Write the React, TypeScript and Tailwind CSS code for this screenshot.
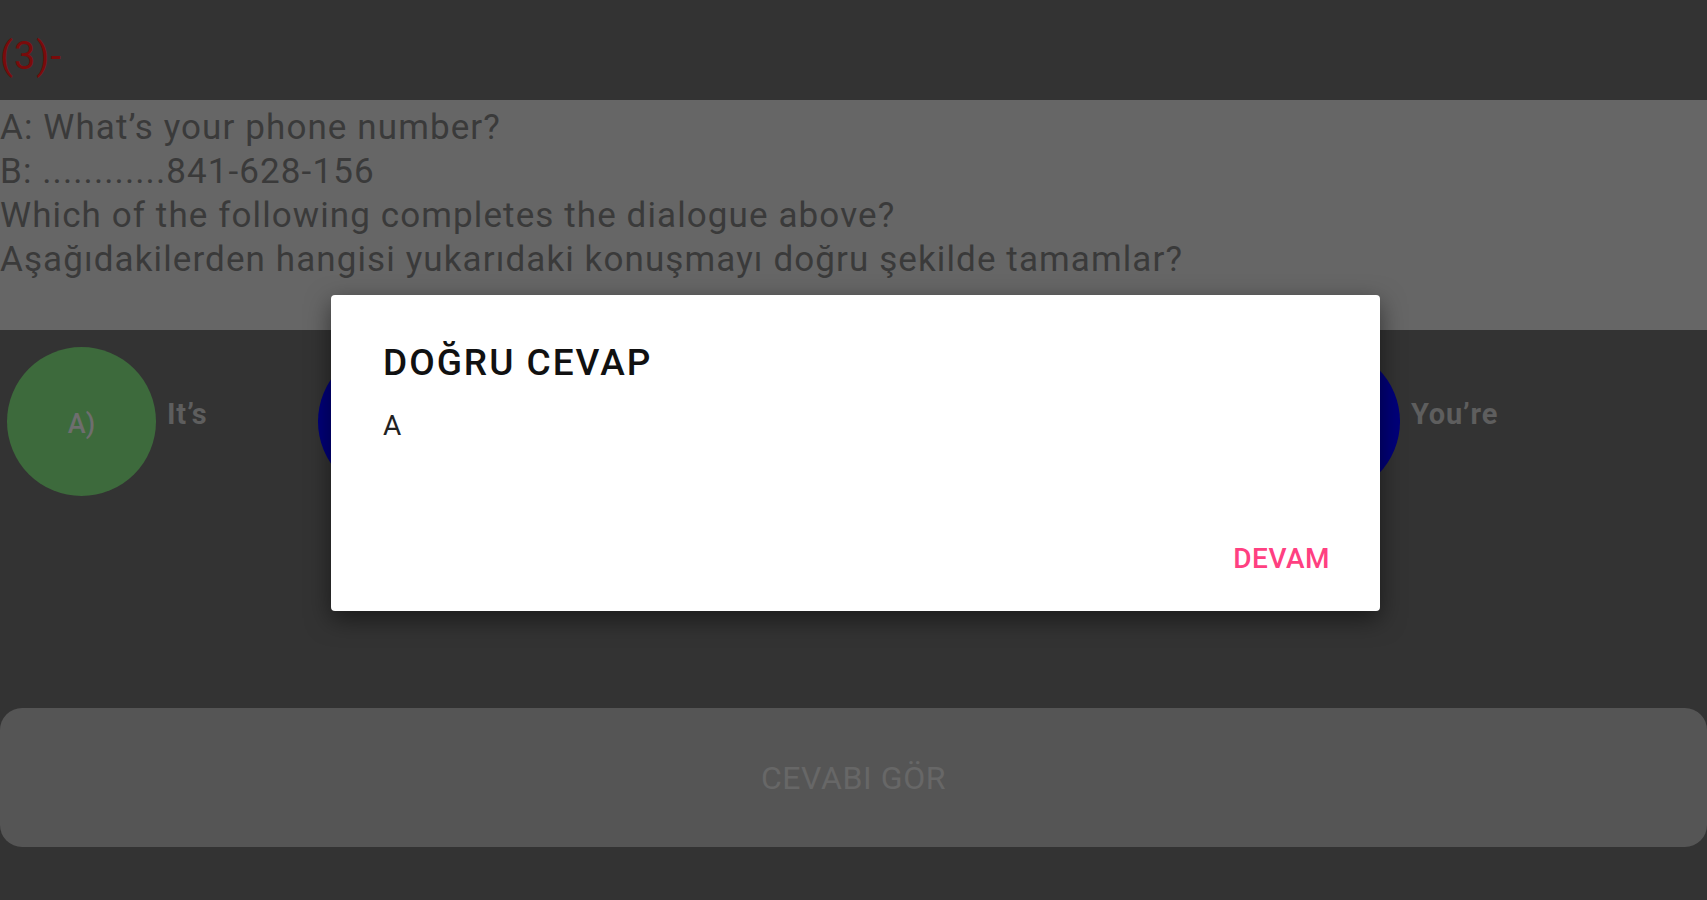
const options = [
  { label: "A)", text: "It’s", color: "bg-[#3d6a3c]" },
  { label: "B)", text: "It’s", color: "bg-[#00007a]" },
  { label: "C)", text: "It’s", color: "bg-[#00007a]" },
  { label: "D)", text: "It’s", color: "bg-[#00007a]" },
  { label: "E)", text: "You’re", color: "bg-[#00007a]" },
];

export default function App() {
  return (
    <div
      className="relative min-h-[900px] bg-[#333333] overflow-hidden"
      style={{ fontFamily: "Roboto, 'Noto Sans', sans-serif" }}
    >
      {/* question number */}
      <div className="h-[100px] pt-[34px]">
        <span className="text-[38px] leading-[44px] tracking-[1px] text-[#7a0b0b]">(3)-</span>
      </div>

      {/* question body */}
      <div className="h-[230px] bg-[#666666] pt-[6px] text-[35px] leading-[44px] tracking-[1.1px] text-[#3a3a3a]">
        <p>A: What’s your phone number?</p>
        <p>B: ............841-628-156</p>
        <p>Which of the following completes the dialogue above?</p>
        <p>Aşağıdakilerden hangisi yukarıdaki konuşmayı doğru şekilde tamamlar?</p>
      </div>

      {/* options */}
      <div className="flex h-[378px] pt-[17px] pl-[7px]">
        {options.map((o) => (
          <div key={o.label} className="flex w-[311px] shrink-0 items-start gap-[11px]">
            <div
              className={`flex h-[149px] w-[149px] shrink-0 items-center justify-center rounded-full ${o.color}`}
            >
              <span className="mt-[6px] text-[27px] font-medium text-[#6e6e6e]">{o.label}</span>
            </div>
            <span className="mt-[46px] text-[29px] font-bold tracking-[0.8px] text-[#5e5e5e]">{o.text}</span>
          </div>
        ))}
      </div>

      {/* show answer button */}
      <button className="flex h-[139px] w-full items-center justify-center rounded-[22px] bg-[#555555] text-[32px] tracking-[0.6px] text-[#676767]">
        CEVABI GÖR
      </button>

      {/* dialog */}
      <div className="absolute inset-0 flex items-center justify-center pt-[6px] pl-[4px]">
        <div className="flex h-[316px] w-[1049px] flex-col rounded-[4px] bg-white pl-[52px] pr-[50px] pt-[46px] pb-[36px] shadow-[0_8px_24px_rgba(0,0,0,0.5)]">
          <h2 className="text-[37px] font-medium leading-[44px] tracking-[2px] text-[#111111]">DOĞRU CEVAP</h2>
          <p className="mt-[24px] text-[28px] leading-[34px] tracking-[1px] text-[#222222]">A</p>
          <div className="mt-auto flex justify-end">
            <button className="text-[28px] font-medium leading-[32px] tracking-[0.5px] text-[#ff4081]">DEVAM</button>
          </div>
        </div>
      </div>
    </div>
  );
}
